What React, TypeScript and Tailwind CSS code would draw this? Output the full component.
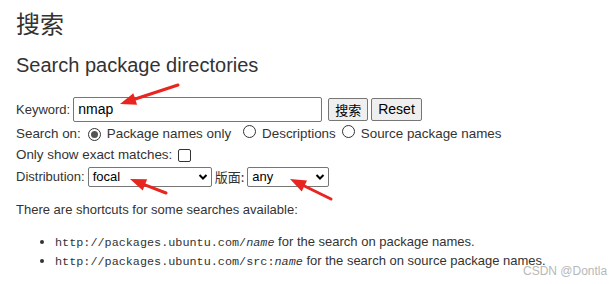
import React from 'react';

function Radio({ checked }: { checked?: boolean }) {
  return (
    <span className="inline-flex h-[13px] w-[13px] items-center justify-center rounded-full border border-[#333] bg-white">
      {checked && <span className="h-[7px] w-[7px] rounded-full bg-[#555]" />}
    </span>
  );
}

function Select({ value, width }: { value: string; width: string }) {
  return (
    <span className={`inline-flex h-[20px] items-center justify-between rounded-[2px] border border-[#767676] bg-white pl-[4px] pr-[3px] text-black ${width}`}>
      <span>{value}</span>
      <svg width="10" height="8" viewBox="0 0 10 8">
        <path d="M1.5 2 L5 5.5 L8.5 2" fill="none" stroke="#000" strokeWidth="2" />
      </svg>
    </span>
  );
}

function Arrow({ x1, y1, x2, y2 }: { x1: number; y1: number; x2: number; y2: number }) {
  const a = Math.atan2(y2 - y1, x2 - x1);
  const len = 16;
  const w = 6;
  const bx = x2 - Math.cos(a) * len;
  const by = y2 - Math.sin(a) * len;
  const px = -Math.sin(a) * w;
  const py = Math.cos(a) * w;
  return (
    <g>
      <line x1={x1} y1={y1} x2={bx} y2={by} stroke="#e8251f" strokeWidth="3" strokeLinecap="round" />
      <polygon points={`${x2},${y2} ${bx + px},${by + py} ${bx - px},${by - py}`} fill="#e8251f" />
    </g>
  );
}

export default function App() {
  return (
    <div className="relative h-[284px] w-[615px] overflow-hidden bg-white pl-[16px] font-['Liberation_Sans','Noto_Sans_CJK_SC',sans-serif] text-[13px] text-[#333]">
      <h1 className="pt-[9px] text-[24px] leading-[28px] font-['Noto_Sans_CJK_SC',sans-serif] text-[#333]">搜索</h1>
      <h2 className="mt-[16px] text-[20px] leading-[24px]">Search package directories</h2>

      <div className="mt-[20px] flex flex-col text-[13.4px]">
        <div className="flex h-[25px] items-center gap-[3px] text-[13px]">
          <span>Keyword:</span>
          <span className="flex h-[25px] w-[249px] items-center rounded-[2px] border border-[#767676] bg-white px-[4px] text-[14px] text-black">
            nmap
          </span>
          <span className="ml-[3px] flex h-[23px] items-center rounded-[2px] border border-[#767676] bg-[#efefef] px-[6px] text-[13px] text-black font-['Noto_Sans_CJK_SC',sans-serif]">
            搜索
          </span>
          <span className="flex h-[23px] items-center rounded-[2px] border border-[#767676] bg-[#efefef] px-[6px] text-[14px] text-black">
            Reset
          </span>
        </div>
        <div className="mt-[2px] flex h-[20px] items-center">
          <span>Search on:</span>
          <span className="ml-[7px] mr-[6px]"><Radio checked /></span>
          <span>Package names only</span>
          <span className="ml-[12px] mr-[6px]"><Radio /></span>
          <span>Descriptions</span>
          <span className="ml-[6px] mr-[6px]"><Radio /></span>
          <span>Source package names</span>
        </div>
        <div className="flex h-[22px] items-center">
          <span>Only show exact matches:</span>
          <span className="ml-[6px] h-[13px] w-[13px] rounded-[2px] border border-[#333] bg-white" />
        </div>
        <div className="flex h-[22px] items-center gap-[3px] text-[13px]">
          <span>Distribution:</span>
          <Select value="focal" width="w-[124px]" />
          <span className="font-['Noto_Sans_CJK_SC',sans-serif]">版面:</span>
          <Select value="any" width="w-[82px]" />
        </div>
      </div>

      <p className="mt-[14px] leading-[16px]">There are shortcuts for some searches available:</p>

      <ul className="mt-[14px] list-disc pl-[39px] leading-[19px]">
        <li className="h-[19px]">
          <code className="font-['Liberation_Mono',monospace] text-[11.8px] leading-[19px]">
            http://packages.ubuntu.com/<i>name</i>
          </code>{' '}
          for the search on package names.
        </li>
        <li className="h-[19px]">
          <code className="font-['Liberation_Mono',monospace] text-[11.8px] leading-[19px]">
            http://packages.ubuntu.com/src:<i>name</i>
          </code>{' '}
          for the search on source package names.
        </li>
      </ul>

      <span className="absolute left-[523px] top-[262px] text-[12px] text-[#b8b8b8]">CSDN @Dontla</span>

      <svg className="pointer-events-none absolute left-0 top-0" width="615" height="284">
        <Arrow x1={178} y1={85} x2={120} y2={104} />
        <Arrow x1={166} y1={193} x2={130} y2={179} />
        <Arrow x1={331} y1={199} x2={290} y2={179} />
      </svg>
    </div>
  );
}
